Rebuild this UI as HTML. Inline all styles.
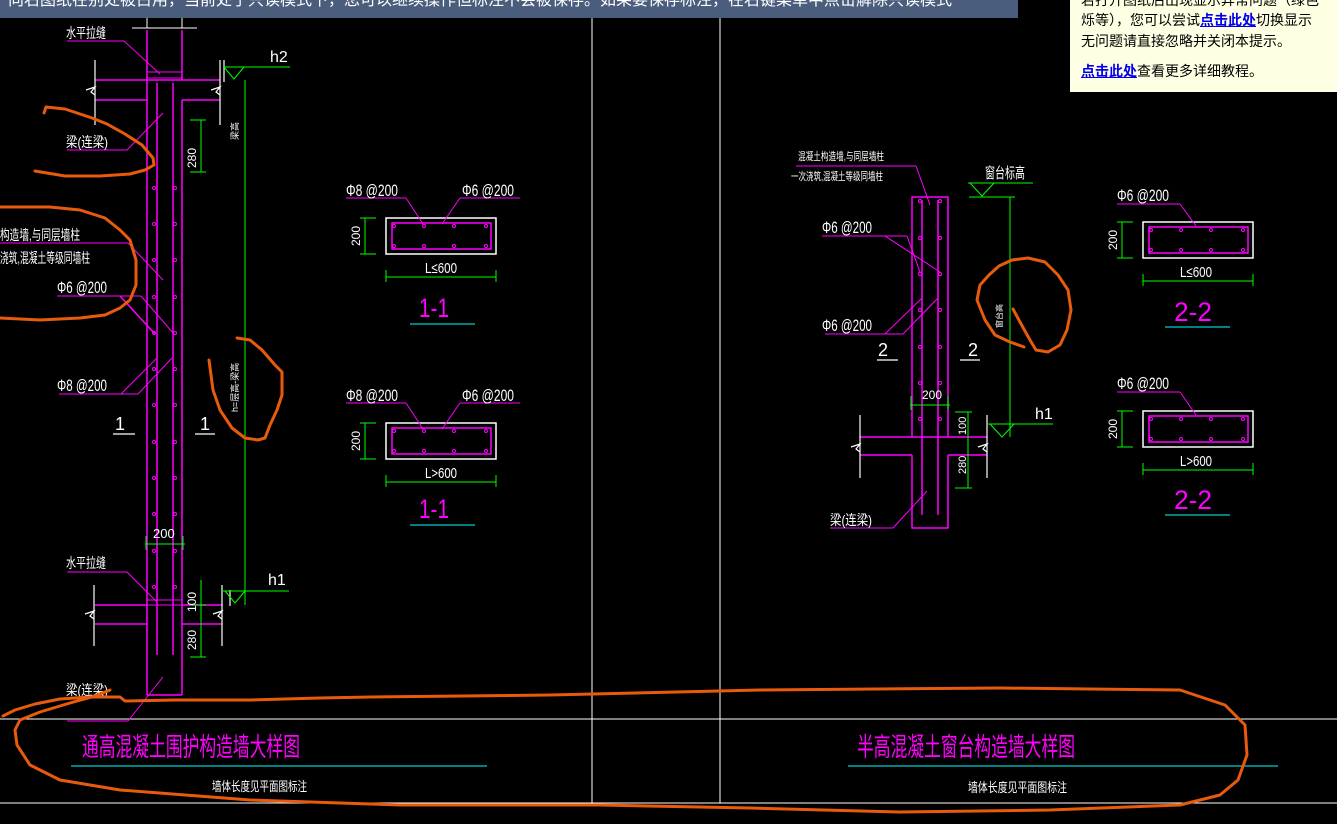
<!DOCTYPE html>
<html><head><meta charset="utf-8"><style>
html,body{margin:0;padding:0;background:#000;width:1337px;height:824px;overflow:hidden}
svg{position:absolute;left:0;top:0}
.banner{position:absolute;left:0;top:0;width:1018px;height:18px;background:#4b5d7d;overflow:hidden}
.banner div{position:absolute;left:8px;top:-9px;color:#fff;font:16px/20px "Liberation Sans","Noto Sans CJK SC",sans-serif;white-space:nowrap}
.pop{position:absolute;left:1070px;top:0;width:267px;height:92px;background:#ffffe3;font:14px/21px "Liberation Sans","Noto Sans CJK SC",sans-serif;color:#000;overflow:hidden}
.pop a{color:#00e;font-weight:bold;text-decoration:underline}
.c{shape-rendering:crispEdges}
</style></head><body>
<svg width="1337" height="824" xmlns="http://www.w3.org/2000/svg" font-family="'Liberation Sans','Noto Sans CJK SC',sans-serif">
<defs>
<g id="sec">
<rect x="0" y="0" width="110" height="36" fill="none" stroke="#fff" stroke-width="1.5"/>
<rect x="6" y="5" width="99" height="26" fill="none" stroke="#f0f" stroke-width="1.5"/>
<g fill="none" stroke="#f0f"><circle cx="8" cy="8" r="1.5"/><circle cx="38" cy="8" r="1.5"/><circle cx="68" cy="8" r="1.5"/><circle cx="100" cy="8" r="1.5"/><circle cx="8" cy="28" r="1.5"/><circle cx="38" cy="28" r="1.5"/><circle cx="68" cy="28" r="1.5"/><circle cx="100" cy="28" r="1.5"/></g>
<g class="c" stroke="#0f0"><line x1="-21" y1="0" x2="-21" y2="36"/><line x1="-26" y1="0" x2="-10" y2="0"/><line x1="-26" y1="36" x2="-10" y2="36"/>
<line x1="0" y1="59" x2="110" y2="59"/><line x1="0" y1="52" x2="0" y2="64"/><line x1="110" y1="52" x2="110" y2="64"/></g>
<text x="-26" y="18" fill="#fff" font-size="12" transform="rotate(-90 -26 18)" text-anchor="middle">200</text>
</g>
</defs>
<g stroke="#fff" stroke-width="1" class="c">
<line x1="592" y1="18" x2="592" y2="803"/><line x1="720" y1="18" x2="720" y2="803"/>
<line x1="0" y1="719" x2="1337" y2="719"/><line x1="0" y1="803" x2="1337" y2="803"/>
<line x1="147" y1="18" x2="147" y2="28"/><line x1="182" y1="18" x2="182" y2="28"/><line x1="132" y1="28" x2="197" y2="28"/>
</g>
<g stroke="#f0f" stroke-width="1.5" fill="none">
<line x1="147" y1="30" x2="147" y2="695"/><line x1="182" y1="30" x2="182" y2="80"/>
<line x1="182" y1="100" x2="182" y2="695"/><line x1="147" y1="695" x2="182" y2="695"/>
<line x1="157" y1="83" x2="157" y2="655"/><line x1="173" y1="83" x2="173" y2="655"/>
<line x1="95" y1="80" x2="220" y2="80"/><line x1="95" y1="100" x2="147" y2="100"/><line x1="182" y1="100" x2="220" y2="100"/>
<line x1="95" y1="605" x2="147" y2="605"/><line x1="182" y1="605" x2="222" y2="605"/>
<line x1="95" y1="624" x2="147" y2="624"/><line x1="182" y1="624" x2="222" y2="624"/>
<rect x="147" y="72" width="35" height="6" stroke-width="1"/><rect x="147" y="600" width="35" height="5" stroke-width="1"/>
<line x1="67" y1="41" x2="124" y2="41" stroke-width="1"/><line x1="124" y1="41" x2="160" y2="74" stroke-width="1"/>
<line x1="67" y1="150" x2="127" y2="150" stroke-width="1"/><line x1="127" y1="150" x2="163" y2="113" stroke-width="1"/>
<line x1="0" y1="243" x2="128" y2="243" stroke-width="1"/><line x1="128" y1="243" x2="163" y2="280" stroke-width="1"/>
<line x1="57" y1="296" x2="141" y2="296" stroke-width="1"/><line x1="120" y1="296" x2="155" y2="334"/><line x1="141" y1="296" x2="174" y2="334" stroke-width="1"/>
<line x1="59" y1="394" x2="138" y2="394" stroke-width="1"/><line x1="121" y1="394" x2="157" y2="358" stroke-width="1"/><line x1="138" y1="394" x2="172" y2="358" stroke-width="1"/>
<line x1="67" y1="572" x2="127" y2="572" stroke-width="1"/><line x1="127" y1="572" x2="157" y2="602" stroke-width="1"/>
<line x1="67" y1="721" x2="128" y2="721" stroke-width="1"/><line x1="128" y1="721" x2="163" y2="677" stroke-width="1"/>
</g>
<g fill="none" stroke="#f0f" stroke-width="1">
<circle cx="154" cy="188" r="1.5"/><circle cx="175" cy="188" r="1.5"/><circle cx="154" cy="224" r="1.5"/><circle cx="175" cy="224" r="1.5"/>
<circle cx="154" cy="260" r="1.5"/><circle cx="175" cy="260" r="1.5"/><circle cx="154" cy="297" r="1.5"/><circle cx="175" cy="297" r="1.5"/>
<circle cx="154" cy="333" r="1.5"/><circle cx="175" cy="333" r="1.5"/><circle cx="154" cy="369" r="1.5"/><circle cx="175" cy="369" r="1.5"/>
<circle cx="154" cy="405" r="1.5"/><circle cx="175" cy="405" r="1.5"/><circle cx="154" cy="442" r="1.5"/><circle cx="175" cy="442" r="1.5"/>
<circle cx="154" cy="478" r="1.5"/><circle cx="175" cy="478" r="1.5"/><circle cx="154" cy="514" r="1.5"/><circle cx="175" cy="514" r="1.5"/>
<circle cx="154" cy="551" r="1.5"/><circle cx="175" cy="551" r="1.5"/><circle cx="154" cy="587" r="1.5"/><circle cx="175" cy="587" r="1.5"/>
</g>
<g stroke="#fff" fill="none" stroke-width="1.2">
<line x1="95" y1="60" x2="95" y2="125"/><line x1="220" y1="60" x2="220" y2="125"/>
<path d="M86 90 l9-3 -4 5 4 3"/><path d="M211 90 l9-3 -4 5 4 3"/>
<line x1="94" y1="585" x2="94" y2="646"/><line x1="222" y1="585" x2="222" y2="646"/>
<path d="M85 614 l9-3 -4 5 4 3"/><path d="M213 614 l9-3 -4 5 4 3"/>
<line x1="113" y1="434" x2="135" y2="434"/><line x1="195" y1="434" x2="215" y2="434"/>
<line x1="224" y1="60" x2="224" y2="82"/><line x1="230" y1="590" x2="230" y2="606"/>
</g>
<g stroke="#0f0" fill="none" stroke-width="1" class="c">
<line x1="245" y1="80" x2="245" y2="605"/><line x1="224" y1="67" x2="290" y2="67"/>
<line x1="222" y1="591" x2="289" y2="591"/>
<line x1="201" y1="120" x2="201" y2="172"/><line x1="190" y1="120" x2="206" y2="120"/><line x1="190" y1="172" x2="206" y2="172"/>
<line x1="201" y1="580" x2="201" y2="657"/><line x1="190" y1="605" x2="206" y2="605"/><line x1="190" y1="657" x2="206" y2="657"/>
<line x1="145" y1="544" x2="185" y2="544"/><line x1="146" y1="536" x2="146" y2="550"/><line x1="183" y1="536" x2="183" y2="550"/>
</g>
<g stroke="#0f0" fill="none"><path d="M224 67 l10 12 10 -12"/><path d="M225 591 l10 12 10 -12"/></g>
<g fill="#fff" font-size="14">
<text x="66" y="38" textLength="40" lengthAdjust="spacingAndGlyphs">水平拉缝</text>
<text x="66" y="147" textLength="42" lengthAdjust="spacingAndGlyphs">梁(连梁)</text>
<text x="0" y="240" textLength="80" lengthAdjust="spacingAndGlyphs">构造墙,与同层墙柱</text>
<text x="0" y="263" textLength="90" lengthAdjust="spacingAndGlyphs">浇筑,混凝土等级同墙柱</text>
<text x="57" y="293" font-size="17" textLength="50" lengthAdjust="spacingAndGlyphs">Φ6 @200</text>
<text x="57" y="391" font-size="17" textLength="50" lengthAdjust="spacingAndGlyphs">Φ8 @200</text>
<text x="66" y="568" textLength="40" lengthAdjust="spacingAndGlyphs">水平拉缝</text>
<text x="66" y="695" textLength="42" lengthAdjust="spacingAndGlyphs">梁(连梁)</text>
<text x="270" y="62" font-size="16">h2</text><text x="268" y="585" font-size="16">h1</text>
<text x="115" y="430" font-size="18">1</text><text x="200" y="430" font-size="18">1</text>
<text x="153" y="538" font-size="13">200</text>
<text x="0" y="0" font-size="12" transform="translate(196,168) rotate(-90)">280</text>
<text x="0" y="0" font-size="12" transform="translate(196,612) rotate(-90)">100</text>
<text x="0" y="0" font-size="12" transform="translate(196,650) rotate(-90)">280</text>
<text x="0" y="0" font-size="9" transform="translate(238,412) rotate(-90)">h=层高-梁高</text>
<text x="0" y="0" font-size="9" transform="translate(238,140) rotate(-90)">梁高</text>
</g>
<use href="#sec" x="386" y="218"/><use href="#sec" x="386" y="423"/>
<g stroke="#f0f" stroke-width="1" fill="none">
<line x1="346" y1="198" x2="406" y2="198"/><line x1="406" y1="198" x2="423" y2="224"/>
<line x1="460" y1="198" x2="520" y2="198"/><line x1="460" y1="198" x2="442" y2="224"/>
<line x1="346" y1="403" x2="406" y2="403"/><line x1="406" y1="403" x2="423" y2="429"/>
<line x1="460" y1="403" x2="520" y2="403"/><line x1="460" y1="403" x2="442" y2="429"/>
</g>
<g stroke="#0ff" class="c"><line x1="410" y1="324" x2="475" y2="324"/><line x1="410" y1="525" x2="475" y2="525"/></g>
<g fill="#fff" font-size="17">
<text x="346" y="196" textLength="52" lengthAdjust="spacingAndGlyphs">Φ8 @200</text>
<text x="462" y="196" textLength="52" lengthAdjust="spacingAndGlyphs">Φ6 @200</text>
<text x="346" y="401" textLength="52" lengthAdjust="spacingAndGlyphs">Φ8 @200</text>
<text x="462" y="401" textLength="52" lengthAdjust="spacingAndGlyphs">Φ6 @200</text>
<text x="425" y="273" font-size="15" textLength="32" lengthAdjust="spacingAndGlyphs">L≤600</text><text x="425" y="478" font-size="15" textLength="32" lengthAdjust="spacingAndGlyphs">L&gt;600</text>
</g>
<g fill="#f0f" font-size="27"><text x="419" y="317" textLength="30" lengthAdjust="spacingAndGlyphs">1-1</text><text x="419" y="518" textLength="30" lengthAdjust="spacingAndGlyphs">1-1</text></g>
<g stroke="#f0f" stroke-width="1.5" fill="none">
<path d="M912 437 V197 H948 V437"/><path d="M912 455 V528 H948 V455"/>
<line x1="922" y1="200" x2="922" y2="515"/><line x1="938" y1="200" x2="938" y2="515"/>
<line x1="860" y1="437" x2="987" y2="437"/><line x1="860" y1="455" x2="912" y2="455"/><line x1="948" y1="455" x2="987" y2="455"/>
<g stroke-width="1">
<line x1="796" y1="166" x2="916" y2="166"/><line x1="916" y1="166" x2="930" y2="205"/>
<line x1="822" y1="236" x2="907" y2="236"/><line x1="907" y1="236" x2="920" y2="272"/><line x1="885" y1="236" x2="940" y2="272"/>
<line x1="825" y1="334" x2="903" y2="334"/><line x1="885" y1="334" x2="922" y2="298"/><line x1="903" y1="334" x2="938" y2="298"/>
<line x1="830" y1="528" x2="893" y2="528"/><line x1="893" y1="528" x2="927" y2="491"/>
</g>
</g>
<g fill="none" stroke="#f0f" stroke-width="1">
<circle cx="920" cy="201" r="1.5"/><circle cx="940" cy="201" r="1.5"/><circle cx="920" cy="238" r="1.5"/><circle cx="940" cy="238" r="1.5"/>
<circle cx="920" cy="274" r="1.5"/><circle cx="940" cy="274" r="1.5"/><circle cx="920" cy="310" r="1.5"/><circle cx="940" cy="310" r="1.5"/>
<circle cx="920" cy="347" r="1.5"/><circle cx="940" cy="347" r="1.5"/><circle cx="920" cy="383" r="1.5"/><circle cx="940" cy="383" r="1.5"/>
<circle cx="920" cy="419" r="1.5"/><circle cx="940" cy="419" r="1.5"/>
</g>
<g stroke="#fff" fill="none" stroke-width="1.2">
<line x1="860" y1="415" x2="860" y2="478"/><line x1="987" y1="415" x2="987" y2="478"/>
<path d="M851 447 l9-3 -4 5 4 3"/><path d="M978 447 l9-3 -4 5 4 3"/>
<line x1="877" y1="360" x2="898" y2="360"/><line x1="960" y1="360" x2="980" y2="360"/>
</g>
<g stroke="#0f0" fill="none" stroke-width="1" class="c">
<line x1="968" y1="183" x2="1033" y2="183"/><line x1="969" y1="197" x2="1015" y2="197"/>
<line x1="1010" y1="197" x2="1010" y2="437"/>
<line x1="988" y1="424" x2="1053" y2="424"/>
<line x1="968" y1="412" x2="968" y2="488"/><line x1="955" y1="412" x2="972" y2="412"/><line x1="955" y1="488" x2="972" y2="488"/>
<line x1="910" y1="405" x2="950" y2="405"/><line x1="911" y1="396" x2="911" y2="410"/><line x1="948" y1="396" x2="948" y2="410"/>
</g>
<g stroke="#0f0" fill="none"><path d="M970 183 l12 13 12 -13"/><path d="M990 424 l12 13 12 -13"/></g>
<g fill="#fff" font-size="14">
<text x="798" y="160" font-size="11" textLength="86" lengthAdjust="spacingAndGlyphs">混凝土构造墙,与同层墙柱</text>
<text x="791" y="180" font-size="11" textLength="92" lengthAdjust="spacingAndGlyphs">一次浇筑,混凝土等级同墙柱</text>
<text x="822" y="233" font-size="17" textLength="50" lengthAdjust="spacingAndGlyphs">Φ6 @200</text>
<text x="822" y="331" font-size="17" textLength="50" lengthAdjust="spacingAndGlyphs">Φ6 @200</text>
<text x="985" y="178" font-size="15" textLength="40" lengthAdjust="spacingAndGlyphs">窗台标高</text>
<text x="1035" y="419" font-size="16">h1</text>
<text x="878" y="356" font-size="18">2</text><text x="968" y="356" font-size="18">2</text>
<text x="922" y="399" font-size="12">200</text>
<text x="830" y="525" textLength="42" lengthAdjust="spacingAndGlyphs">梁(连梁)</text>
<text x="0" y="0" font-size="11" transform="translate(966,435) rotate(-90)">100</text>
<text x="0" y="0" font-size="11" transform="translate(966,474) rotate(-90)">280</text>
<text x="0" y="0" font-size="8" transform="translate(1002,328) rotate(-90)">窗台高</text>
</g>
<use href="#sec" x="1143" y="222"/><use href="#sec" x="1143" y="411"/>
<g stroke="#f0f" stroke-width="1" fill="none">
<line x1="1117" y1="204" x2="1180" y2="204"/><line x1="1180" y1="204" x2="1196" y2="226"/>
<line x1="1117" y1="392" x2="1180" y2="392"/><line x1="1180" y1="392" x2="1196" y2="415"/>
</g>
<g stroke="#0ff" class="c"><line x1="1165" y1="327" x2="1230" y2="327"/><line x1="1165" y1="515" x2="1230" y2="515"/></g>
<g fill="#fff" font-size="17">
<text x="1117" y="201" textLength="52" lengthAdjust="spacingAndGlyphs">Φ6 @200</text>
<text x="1117" y="389" textLength="52" lengthAdjust="spacingAndGlyphs">Φ6 @200</text>
<text x="1180" y="277" font-size="15" textLength="32" lengthAdjust="spacingAndGlyphs">L≤600</text><text x="1180" y="466" font-size="15" textLength="32" lengthAdjust="spacingAndGlyphs">L&gt;600</text>
</g>
<g fill="#f0f" font-size="27"><text x="1174" y="321" textLength="38" lengthAdjust="spacingAndGlyphs">2-2</text><text x="1174" y="509" textLength="38" lengthAdjust="spacingAndGlyphs">2-2</text></g>
<g stroke="#0ff" class="c"><line x1="71" y1="766" x2="487" y2="766"/><line x1="848" y1="766" x2="1278" y2="766"/></g>
<g fill="#f0f" font-size="26">
<text x="82" y="756" textLength="218" lengthAdjust="spacingAndGlyphs">通高混凝土围护构造墙大样图</text>
<text x="857" y="756" textLength="218" lengthAdjust="spacingAndGlyphs">半高混凝土窗台构造墙大样图</text>
</g>
<g fill="#fff" font-size="13">
<text x="212" y="791" textLength="95" lengthAdjust="spacingAndGlyphs">墙体长度见平面图标注</text>
<text x="968" y="792" textLength="99" lengthAdjust="spacingAndGlyphs">墙体长度见平面图标注</text>
</g>
<g stroke="#e85a0c" stroke-width="3" fill="none" stroke-linejoin="round" stroke-linecap="round">
<path d="M44 113 L46 107 L65 109 L92 118 L107 124 L125 134 L142 145 L153 158 L154 165 L145 170 L130 174 L100 176 L65 176 L35 171"/>
<path d="M0 207 L50 207 L80 210 L105 218 L120 230 L130 240 L136 260 L136 285 L130 300 L120 308 L105 315 L80 318 L40 320 L0 318"/>
<path d="M237 338 L250 340 L262 350 L275 365 L282 372 L282 395 L277 410 L270 425 L265 438 L258 440 L245 438 L232 428 L220 410 L213 390 L209 360"/>
<path d="M3 716 L15 710 L35 704 L60 699 L90 697 L120 697 L125 701 L175 700 L250 700 L320 698 L370 697 L550 695 L760 690 L1000 688 L1180 690 L1225 705 L1245 725 L1247 755 L1238 780 L1220 795 L1180 805 L1050 810 L900 812 L750 808 L600 805 L400 805 L250 800 L120 790 L60 780 L30 765 L17 745 L15 730 L20 720 L40 712 L70 703 L95 696 L110 690"/>
<path d="M1013 309 L1020 322 L1030 340 L1036 350 L1048 352 L1060 345 L1067 330 L1071 310 L1068 290 L1058 275 L1045 262 L1028 258 L1012 260 L999 266 L989 275 L980 285 L977 300 L985 320 L995 335 L1010 342 L1024 347"/>
</g>
</svg>
<div class="banner"><div>向右图纸在别处被占用，当前处于只读模式下，您可以继续操作但标注不会被保存。如果要保存标注，在右键菜单中点击解除只读模式</div></div>
<div class="pop">
<div style="position:absolute;left:11px;top:-10px;white-space:nowrap">若打开图纸后出现显示异常问题（绿色</div>
<div style="position:absolute;left:11px;top:10px;white-space:nowrap">烁等），您可以尝试<a>点击此处</a>切换显示</div>
<div style="position:absolute;left:11px;top:31px;white-space:nowrap">无问题请直接忽略并关闭本提示。</div>
<div style="position:absolute;left:11px;top:61px;white-space:nowrap"><a>点击此处</a>查看更多详细教程。</div>
</div>
</body></html>
